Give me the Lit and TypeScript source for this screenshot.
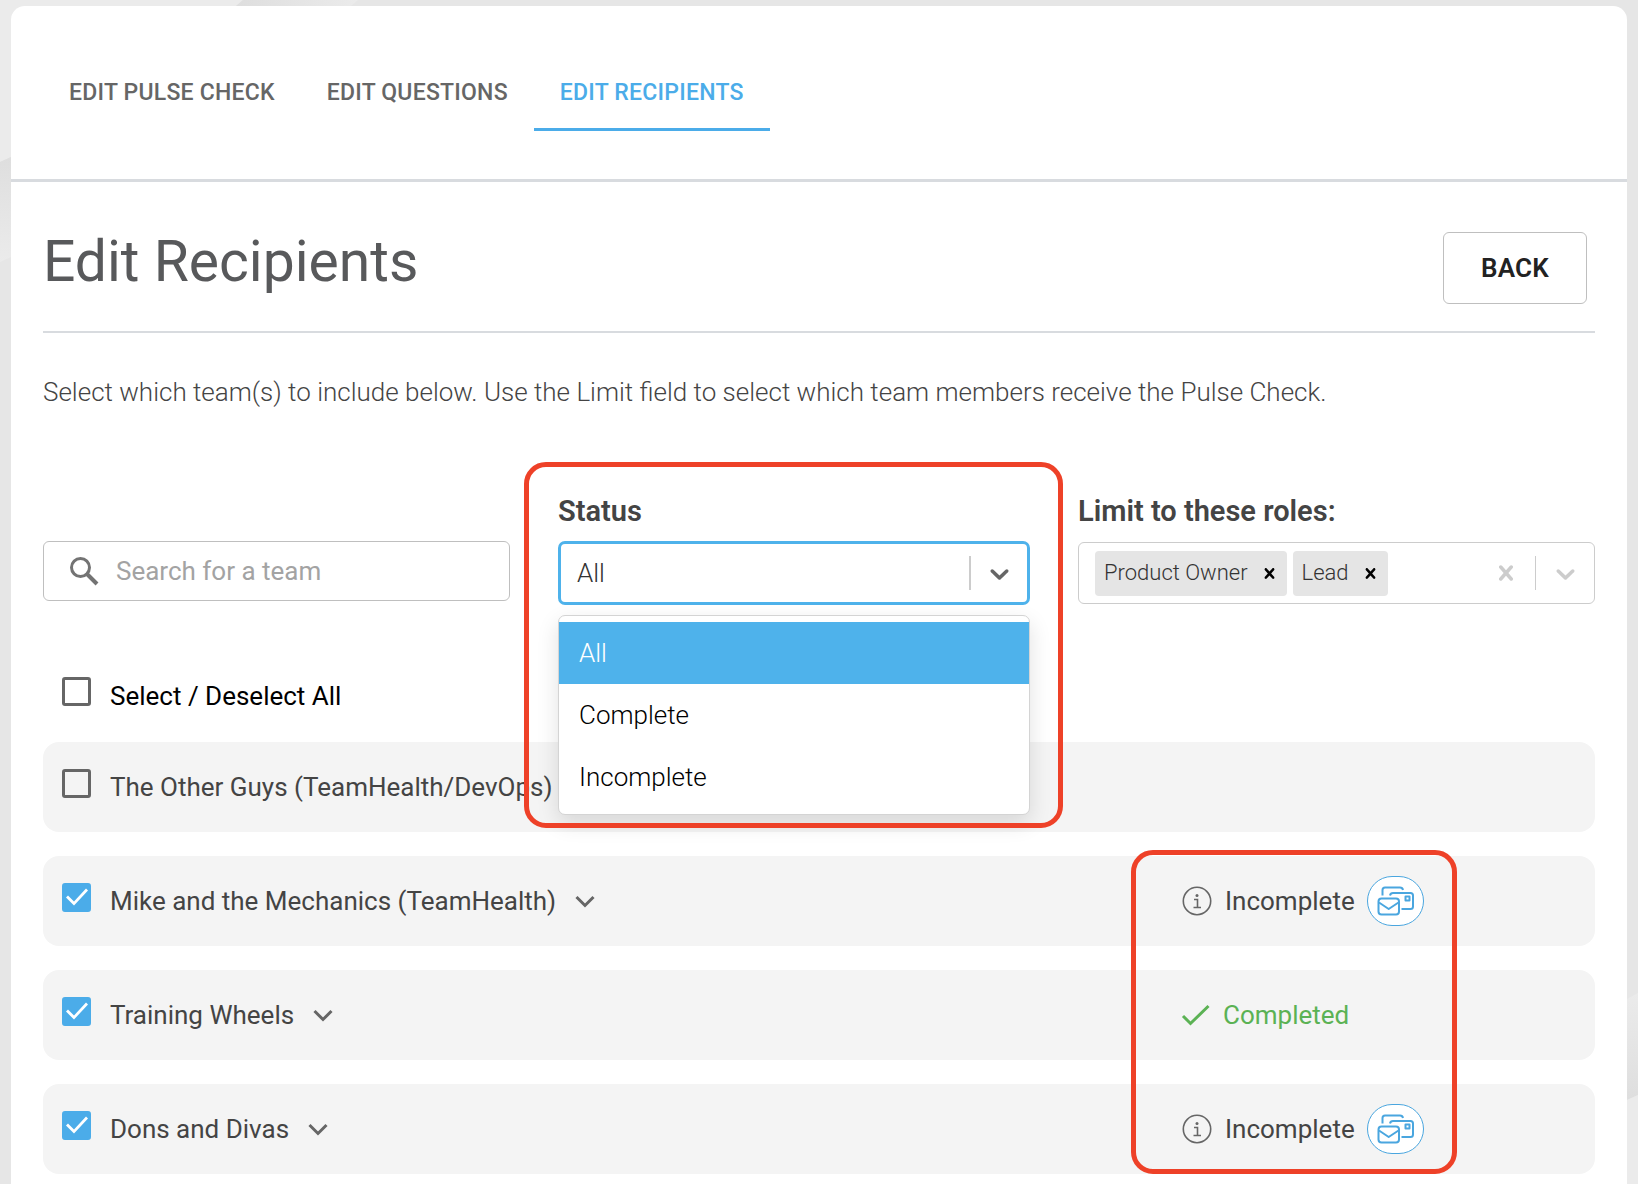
import { LitElement, html, css } from "lit";
import { customElement, state } from "lit/decorators.js";

interface Team {
  name: string;
  checked: boolean;
  expandable: boolean;
  status?: "incomplete" | "completed";
}

const rowChevron = html`
  <svg viewBox="0 0 20 20" width="20" height="20" aria-hidden="true">
    <path d="M1.500 6 L10 14.500 L18.500 6" fill="none" stroke="currentColor" stroke-width="3" />
  </svg>`;

const selectChevron = html`
  <svg viewBox="0 0 20 20" width="31" height="31" aria-hidden="true">
    <path fill="currentColor" d="M4.516 7.548c0.436-0.446 1.043-0.481 1.576 0l3.908 3.747 3.908-3.747c0.533-0.481 1.141-0.446 1.574 0 0.436 0.445 0.408 1.197 0 1.615-0.406 0.418-4.695 4.502-4.695 4.502-0.217 0.223-0.502 0.335-0.787 0.335s-0.57-0.112-0.789-0.335c0 0-4.287-4.084-4.695-4.502s-0.436-1.17 0-1.615z" />
  </svg>`;

const cross = (size: number) => html`
  <svg viewBox="0 0 20 20" width=${size} height=${size} aria-hidden="true">
    <path fill="currentColor" d="M14.348 14.849c-0.469 0.469-1.229 0.469-1.697 0l-2.651-3.030-2.651 3.029c-0.469 0.469-1.229 0.469-1.697 0-0.469-0.469-0.469-1.229 0-1.697l2.758-3.15-2.759-3.152c-0.469-0.469-0.469-1.228 0-1.697s1.228-0.469 1.697 0l2.652 3.031 2.651-3.031c0.469-0.469 1.228-0.469 1.697 0s0.469 1.229 0 1.697l-2.758 3.152 2.758 3.15c0.469 0.469 0.469 1.229 0 1.698z" />
  </svg>`;

@customElement("app-root")
export class AppRoot extends LitElement {
  static styles = css`
    :host {
      display: block;
      position: relative;
      min-height: 100vh;
      box-sizing: border-box;
      padding: 6px 11px 0;
      background: #e6e6e6;
      overflow: hidden;
      font-family: Roboto, "Liberation Sans", sans-serif;
      font-size: 26px;
      line-height: 30px;
      color: #444;
    }
    *, *::before, *::after { box-sizing: border-box; }
    button, input { font: inherit; color: inherit; margin: 0; }
    button { background: none; border: 0; padding: 0; cursor: pointer; }
    svg { display: block; flex: none; }
    .backdrop { position: absolute; left: 0; top: 0; width: 100%; height: 100%; }
    .corner { overflow: visible; }
    .panel {
      position: relative;
      background: #fff;
      border-radius: 14px 14px 0 0;
      min-height: calc(100vh - 6px);
    }
    .tabs {
      display: flex;
      padding: 46px 32px 48px;
      border-bottom: 3px solid #d8dbdf;
    }
    .tab {
      padding: 26px 26px 20px;
      border-bottom: 3px solid transparent;
      font-size: 23px;
      font-weight: 500;
      letter-spacing: 0.01em;
      color: #666;
      text-decoration: none;
      white-space: nowrap;
    }
    .tab.active { color: #4bace9; border-color: #4bace9; }
    .content { padding: 0 32px; }
    .head {
      display: flex;
      justify-content: space-between;
      align-items: flex-start;
      padding: 50px 8px 27px 0;
      border-bottom: 2px solid #d8dbdf;
    }
    h1 {
      margin: 0;
      font-size: 57px;
      line-height: 60px;
      font-weight: 400;
      color: #58595b;
    }
    .back {
      width: 144px;
      height: 72px;
      border: 1px solid #bfbfbf;
      border-radius: 6px;
      font-weight: 600;
      color: #222;
      letter-spacing: 0.01em;
    }
    .intro { margin: 0; padding: 44px 0 87px; font-weight: 300; }
    .filters {
      display: grid;
      grid-template-columns: 467fr 472fr 517fr;
      column-gap: 48px;
      align-items: start;
    }
    .field { position: relative; display: flex; flex-direction: column; }
    .label { font-size: 29px; line-height: 34px; font-weight: 600; margin-bottom: 13px; }
    .search {
      display: flex;
      align-items: center;
      height: 60px;
      margin-top: 47px;
      padding-left: 24px;
      gap: 16px;
      border: 1px solid #bfbfbf;
      border-radius: 6px;
      color: #737373;
    }
    .search input { flex: 1; min-width: 0; border: 0; outline: 0; background: none; padding: 0; }
    .search input::placeholder { color: #a3a3a3; opacity: 1; }
    .combo {
      display: flex;
      align-items: center;
      width: 100%;
      height: 64px;
      padding: 0 12px 0 16px;
      border: 3px solid #4eb2eb;
      border-radius: 7px;
      font-weight: 300;
      color: #333;
      text-align: left;
      background: #fff;
    }
    .grow { flex: 1; }
    .bar { width: 2px; height: 34px; background: #ccc; margin-right: 13px; }
    .combo svg { color: #666; }
    .menu {
      position: absolute;
      z-index: 2;
      top: calc(100% + 10px);
      left: 0;
      width: 100%;
      margin: 0;
      padding: 6px 0;
      list-style: none;
      background: #fff;
      border: 1px solid #d4d4d4;
      border-radius: 7px;
      box-shadow: 0 8px 22px rgba(0, 0, 0, 0.12);
    }
    .option {
      height: 62px;
      padding: 0 20px;
      line-height: 62px;
      font-weight: 300;
      color: #000;
    }
    .option.selected { background: #4eb2eb; color: #fff; }
    .frame {
      position: absolute;
      z-index: 3;
      border: 5px solid #ee4128;
      border-radius: 22px;
      pointer-events: none;
    }
    .status-frame { left: -34px; right: -33px; top: -32px; height: 366px; }
    .roles {
      display: flex;
      align-items: center;
      height: 62px;
      margin: 1px 0;
      padding: 0 13px 0 16px;
      border: 1px solid #ccc;
      border-radius: 6px;
    }
    .chips { display: flex; flex: 1; gap: 6px; }
    .chip {
      display: flex;
      align-items: center;
      height: 45px;
      padding: 0 7px 0 9px;
      gap: 11px;
      font-size: 22px;
      font-weight: 300;
      color: #333;
      background: #e5e5e5;
      border-radius: 4px;
    }
    .chip button { color: #000; }
    .roles > button { color: #ccc; }
    .roles .bar { width: 1px; margin: 0 14px; }
    .all { padding: 72px 0 28px; color: #000; }
    .pick { display: flex; align-items: center; gap: 19px; padding-left: 19px; }
    .box {
      appearance: none;
      width: 29px;
      height: 29px;
      flex: none;
      margin-bottom: 8px;
      border: 3px solid #666;
      border-radius: 3px;
      display: grid;
      place-items: center;
    }
    .box:checked { background: #4bace9; border-color: #4bace9; }
    .box:checked::after {
      content: "";
      width: 24px;
      height: 24px;
      background: #fff;
      clip-path: polygon(1px 12px, 3px 10px, 9px 16px, 21px 3px, 23px 5px, 9px 20px);
    }
    .list, .rows { position: relative; display: flex; flex-direction: column; gap: 24px; }
    .row {
      display: grid;
      grid-template-columns: 1138fr 414fr;
      align-items: center;
      height: 90px;
      background: #f4f4f4;
      border-radius: 16px;
    }
    .expand { color: #666; display: flex; }
    .status { display: flex; align-items: center; gap: 12px; }
    .status.completed { color: #5bb254; }
    .mail {
      display: grid;
      place-items: center;
      width: 57px;
      height: 50px;
      border: 1px solid #4aa6df;
      border-radius: 25px;
      background: #fff;
      color: #4aa6df;
    }
    .rows-frame { left: calc(73.3% - 50px); width: 326px; top: -6px; bottom: 0; }
  `;

  @state() private teams: Team[] = [
    { name: "The Other Guys (TeamHealth/DevOps)", checked: false, expandable: false },
    { name: "Mike and the Mechanics (TeamHealth)", checked: true, expandable: true, status: "incomplete" },
    { name: "Training Wheels", checked: true, expandable: true, status: "completed" },
    { name: "Dons and Divas", checked: true, expandable: true, status: "incomplete" },
  ];
  @state() private status = "All";
  @state() private roles = ["Product Owner", "Lead"];

  private toggle(team: Team) {
    this.teams = this.teams.map((t) => (t === team ? { ...t, checked: !t.checked } : t));
  }

  private toggleAll(e: Event) {
    const checked = (e.target as HTMLInputElement).checked;
    this.teams = this.teams.map((t) => ({ ...t, checked }));
  }

  private renderStatus(team: Team) {
    if (team.status === "completed") {
      return html`<div class="status completed">
        <svg viewBox="0 0 30 24" width="30" height="24" aria-hidden="true">
          <path d="M2 13 L9.500 20.500 L27.500 3" fill="none" stroke="currentColor" stroke-width="3" />
        </svg>
        <span>Completed</span>
      </div>`;
    }
    if (team.status === "incomplete") {
      return html`<div class="status">
        <svg viewBox="0 0 32 30" width="32" height="30" aria-hidden="true">
          <g fill="none" stroke="#666" stroke-width="1.600">
            <circle cx="16" cy="15" r="13.700" />
            <path d="M13 13.500 H16.500 V21.500 M12.500 21.500 H20" />
          </g>
          <circle cx="16" cy="9.500" r="1.500" fill="#666" />
        </svg>
        <span>Incomplete</span>
        <button class="mail" aria-label="Send reminder to ${team.name}">
          <svg viewBox="0 0 37 30" width="37" height="30" aria-hidden="true">
            <g fill="none" stroke="currentColor" stroke-width="2" stroke-linejoin="round">
              <rect x="1.500" y="12.500" width="20.500" height="16" rx="3" />
              <path d="M2 16.500 L11.700 23 L21.500 16.500" />
              <path d="M5.500 9.500 V4 Q5.500 1.500 8 1.500 H23 Q25.500 1.500 26 4" />
              <path d="M13 9.500 Q13.500 7 16 7 H33.500 Q36 7 36 9.500 V20.500 Q36 23 33.500 23 H24.500" />
              <rect x="28.500" y="10.500" width="4" height="4" />
            </g>
          </svg>
        </button>
      </div>`;
    }
    return html`<div></div>`;
  }

  render() {
    return html`
      <svg class="backdrop" aria-hidden="true">
        <defs>
          <linearGradient id="top-band" x1="0" x2="1" y1="0" y2="0">
            <stop offset="0" stop-color="#dedede" />
            <stop offset="1" stop-color="#ebebeb" />
          </linearGradient>
          <linearGradient id="left-band" x1="0" x2="0" y1="0" y2="1">
            <stop offset="0" stop-color="#dedede" />
            <stop offset="1" stop-color="#ebebeb" />
          </linearGradient>
          <linearGradient id="right-band" x1="0" x2="0" y1="0" y2="1">
            <stop offset="0" stop-color="#ebebeb" />
            <stop offset="1" stop-color="#dedede" />
          </linearGradient>
        </defs>
        <path fill="#ebebeb" d="M0 0 H243 L236 6 L11 157 L0 162 Z" />
        <path fill="url(#top-band)" d="M243 0 H358 L351 6 H236 Z" />
        <path fill="url(#left-band)" d="M0 162 L11 157 V257 L0 262 Z" />
        <svg class="corner" x="100%">
          <path fill="url(#right-band)" d="M-11 999 L0 993 V1095 L-11 1100 Z" />
          <path fill="#ebebeb" d="M-11 1100 L0 1095 V1600 H-11 Z" />
        </svg>
      </svg>
      <main class="panel">
        <nav class="tabs">
          <a class="tab" href="#check">EDIT PULSE CHECK</a>
          <a class="tab" href="#questions">EDIT QUESTIONS</a>
          <a class="tab active" href="#recipients" aria-current="page">EDIT RECIPIENTS</a>
        </nav>
        <div class="content">
          <header class="head">
            <h1>Edit Recipients</h1>
            <button class="back">BACK</button>
          </header>
          <p class="intro">
            Select which team(s) to include below. Use the Limit field to select which team members receive the Pulse Check.
          </p>
          <section class="filters">
            <div class="search">
              <svg viewBox="0 0 32 32" width="32" height="32" aria-hidden="true">
                <circle cx="12.500" cy="12.500" r="9" fill="none" stroke="currentColor" stroke-width="3" />
                <path d="M19 19 L29 29" stroke="currentColor" stroke-width="4" />
              </svg>
              <input type="text" placeholder="Search for a team" aria-label="Search for a team" />
            </div>
            <div class="field">
              <span class="label" id="status-label">Status</span>
              <button class="combo" role="combobox" aria-expanded="true" aria-controls="status-menu" aria-labelledby="status-label">
                <span class="grow">${this.status}</span>
                <span class="bar"></span>
                ${selectChevron}
              </button>
              <ul class="menu" id="status-menu" role="listbox" aria-labelledby="status-label">
                ${["All", "Complete", "Incomplete"].map(
                  (o) => html`<li class="option ${o === this.status ? "selected" : ""}" role="option"
                    aria-selected=${o === this.status} @click=${() => (this.status = o)}>${o}</li>`
                )}
              </ul>
              <div class="frame status-frame"></div>
            </div>
            <div class="field">
              <span class="label" id="roles-label">Limit to these roles:</span>
              <div class="roles" role="group" aria-labelledby="roles-label">
                <div class="chips">
                  ${this.roles.map(
                    (r) => html`<span class="chip">${r}
                      <button aria-label="Remove ${r}" @click=${() => (this.roles = this.roles.filter((x) => x !== r))}>${cross(21)}</button>
                    </span>`
                  )}
                </div>
                <button aria-label="Clear roles" @click=${() => (this.roles = [])}>${cross(30)}</button>
                <span class="bar"></span>
                <button aria-label="Open roles">${selectChevron}</button>
              </div>
            </div>
          </section>
          <div class="all">
            <div class="pick">
              <input class="box" type="checkbox" id="all" @change=${this.toggleAll} />
              <label for="all">Select / Deselect All</label>
            </div>
          </div>
          <section class="list">
            ${this.renderRow(this.teams[0], 0)}
            <div class="rows">
              ${this.teams.slice(1).map((t, i) => this.renderRow(t, i + 1))}
              <div class="frame rows-frame"></div>
            </div>
          </section>
        </div>
      </main>
    `;
  }

  private renderRow(team: Team, i: number) {
    return html`<div class="row">
      <div class="pick">
        <input class="box" type="checkbox" id="team-${i}" .checked=${team.checked} @change=${() => this.toggle(team)} />
        <label for="team-${i}">${team.name}</label>
        ${team.expandable
          ? html`<button class="expand" aria-label="Show members of ${team.name}">${rowChevron}</button>`
          : ""}
      </div>
      ${this.renderStatus(team)}
    </div>`;
  }
}
